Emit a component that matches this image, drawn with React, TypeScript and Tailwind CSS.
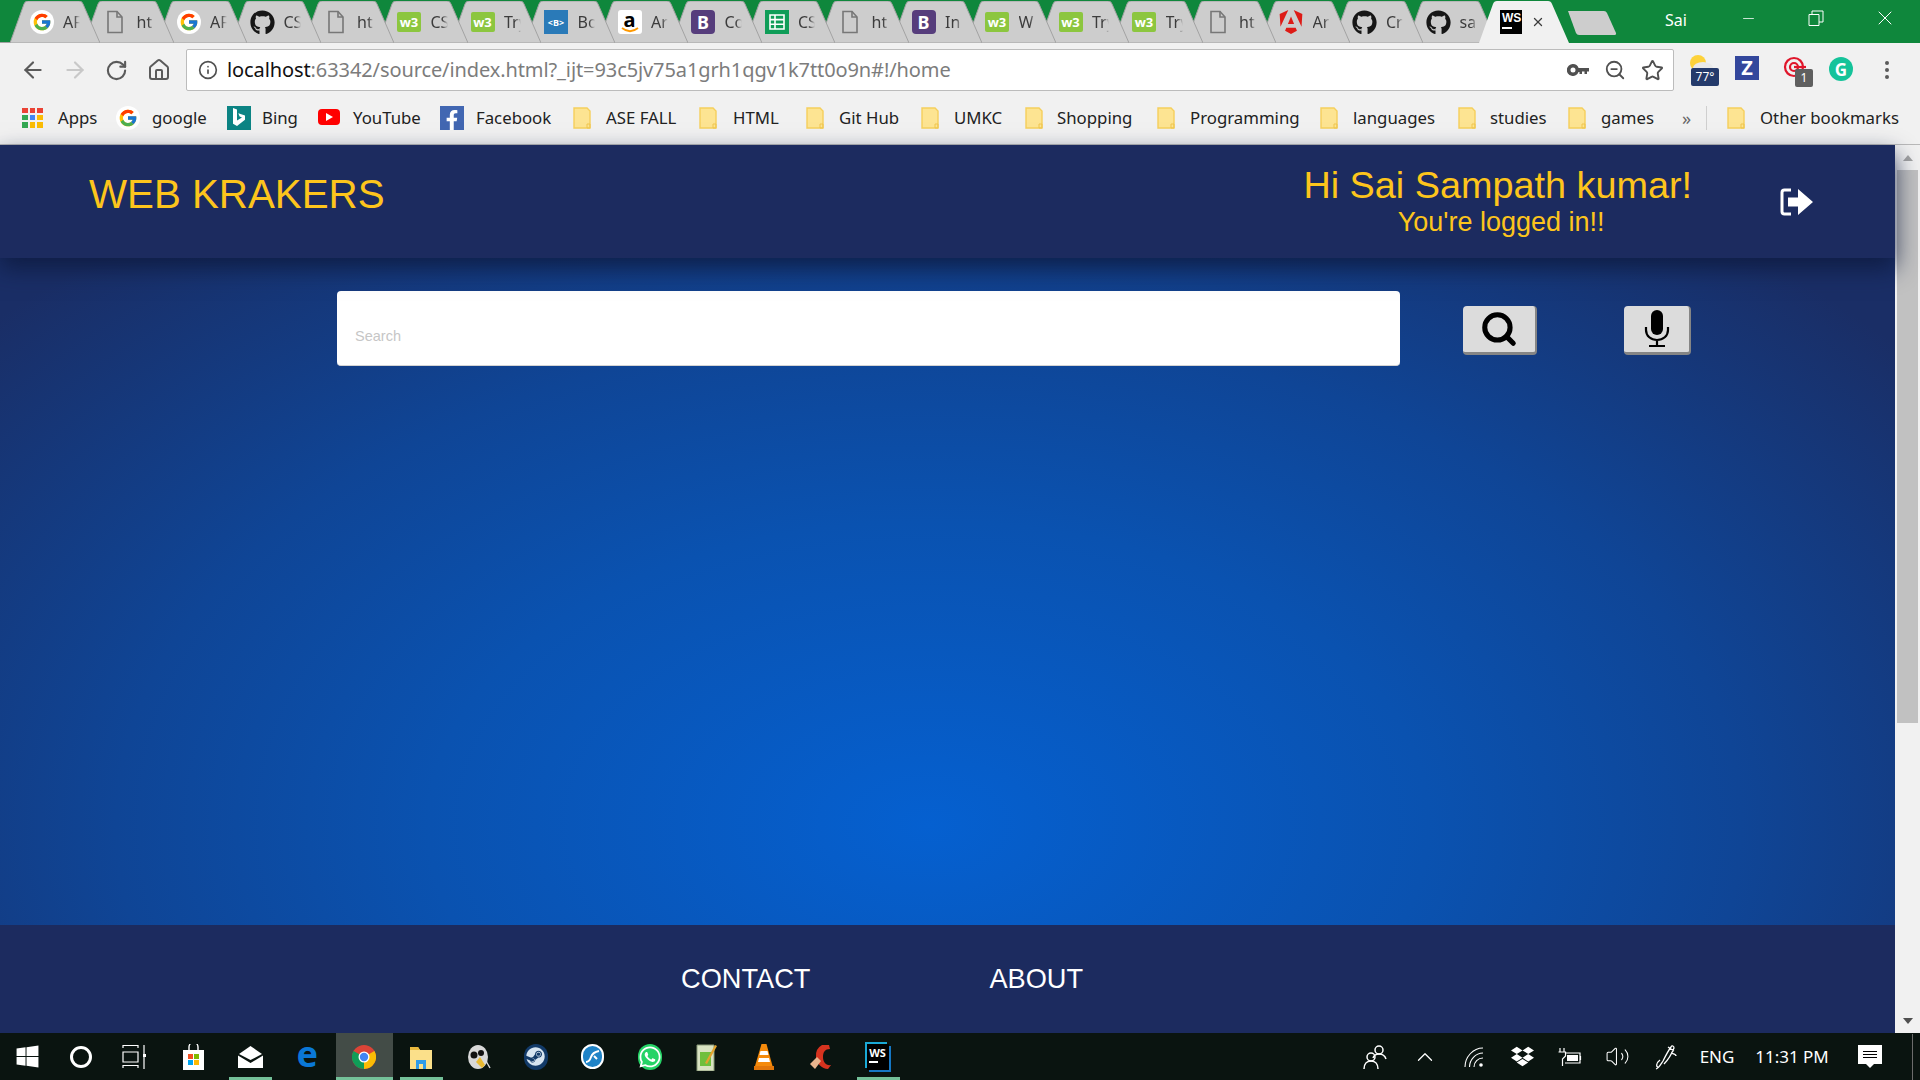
import {
  ArrowLeft,
  ArrowRight,
  ChevronUp,
  Home,
  Info,
  Minus,
  RotateCw,
  Search,
  Star,
  Volume2,
  X,
  ZoomOut,
} from "lucide-react";
import { FaDropbox, FaFacebookF, FaGithub, FaSteam, FaWhatsapp, FaWindows } from "react-icons/fa";
import { FcGoogle } from "react-icons/fc";
import { SiAngular } from "react-icons/si";

const uiFont = "font-['Noto_Sans',sans-serif]";

function GoogleIcon() {
  return (
    <span className="flex h-[24px] w-[24px] shrink-0 items-center justify-center rounded-full bg-white">
      <FcGoogle size={20} />
    </span>
  );
}

function FileIcon() {
  return (
    <svg width="18" height="24" viewBox="0 0 18 24" fill="none" stroke="#777" strokeWidth="1.6" className="shrink-0">
      <path d="M2 1.500h9l5 5.500v15.500H2z" />
      <path d="M11 1.500V7h5" />
    </svg>
  );
}

function W3Icon() {
  return (
    <span className="flex h-[20px] w-[24px] shrink-0 items-center justify-center rounded-[2px] bg-[#8cc63f] text-[13px] font-bold leading-none text-white">
      w3
    </span>
  );
}

function BootIcon() {
  return (
    <span className="flex h-[24px] w-[24px] shrink-0 items-center justify-center rounded-[4px] bg-[#563d7c] text-[18px] font-bold leading-none text-white">
      B
    </span>
  );
}

function BlueBootIcon() {
  return (
    <span className="flex h-[24px] w-[24px] shrink-0 items-center justify-center bg-[#2a7ab8] text-[9px] font-bold leading-none text-white">
      {"<B>"}
    </span>
  );
}

function AmazonIcon() {
  return (
    <span className="relative flex h-[24px] w-[24px] shrink-0 items-center justify-center rounded-[3px] bg-white text-[20px] font-bold leading-none text-black">
      <span className="-mt-[5px]">a</span>
      <svg width="18" height="6" viewBox="0 0 18 6" className="absolute bottom-[1px] left-[3px]" fill="none" stroke="#f90" strokeWidth="1.8">
        <path d="M1 1c5 4 11 4 16 0" />
      </svg>
    </span>
  );
}

function SheetsIcon() {
  return (
    <span className="flex h-[24px] w-[24px] shrink-0 items-center justify-center bg-[#0f9d58]">
      <svg width="16" height="16" viewBox="0 0 16 16" fill="none" stroke="#fff" strokeWidth="1.6">
        <path d="M1 1h14v14H1zM1 5.600h14M1 10.300h14M6 1v14" />
      </svg>
    </span>
  );
}

function WsIcon() {
  return (
    <span className="flex h-[24px] w-[22px] shrink-0 flex-col bg-black px-[2px] pt-[2px] font-['Liberation_Sans',sans-serif] text-[12px] font-bold leading-none text-white">
      WS
      <span className="mt-[3px] h-[2px] w-[10px] bg-white" />
    </span>
  );
}

const tabs = [
  { icon: <GoogleIcon />, title: "AF" },
  { icon: <FileIcon />, title: "ht" },
  { icon: <GoogleIcon />, title: "AF" },
  { icon: <FaGithub size={25} className="shrink-0 text-[#161616]" />, title: "CS" },
  { icon: <FileIcon />, title: "ht" },
  { icon: <W3Icon />, title: "CS" },
  { icon: <W3Icon />, title: "Try" },
  { icon: <BlueBootIcon />, title: "Bo" },
  { icon: <AmazonIcon />, title: "Ar" },
  { icon: <BootIcon />, title: "Co" },
  { icon: <SheetsIcon />, title: "CS" },
  { icon: <FileIcon />, title: "ht" },
  { icon: <BootIcon />, title: "In" },
  { icon: <W3Icon />, title: "W" },
  { icon: <W3Icon />, title: "Try" },
  { icon: <W3Icon />, title: "Try" },
  { icon: <FileIcon />, title: "ht" },
  { icon: <SiAngular size={24} className="shrink-0 text-[#dd1b16]" />, title: "Ar" },
  { icon: <FaGithub size={25} className="shrink-0 text-[#161616]" />, title: "Cr" },
  { icon: <FaGithub size={25} className="shrink-0 text-[#161616]" />, title: "sa" },
];

function Tab({ icon, title, index }: { icon: React.ReactNode; title: string; index: number }) {
  return (
    <div className="relative -mr-[16.5px] h-[42px] w-[90px] shrink-0" style={{ zIndex: 30 - index }}>
      <svg width="90" height="42" viewBox="0 0 90 42" className="absolute inset-0">
        <path d="M0 42 L14 3 Q15 0 18 0 L69 0 Q72 0 73 3 L90 42 Z" fill="#cdcdcd" stroke="#a2a2a2" strokeWidth="1" />
      </svg>
      <div className="relative flex h-full items-center">
        <span className="flex w-[64px] items-center justify-center pr-[1px]">{icon}</span>
      </div>
      <span className="absolute left-[53px] top-[9px] w-[17px] overflow-hidden whitespace-nowrap text-[16px] leading-[24px] text-[#3c3c3c] [mask-image:linear-gradient(to_right,black_65%,transparent)]">
        {title}
      </span>
    </div>
  );
}

function TabStrip() {
  return (
    <div className={`relative flex h-[43px] shrink-0 bg-[#0f873c] pl-[10px] pt-[1px] ${uiFont}`}>
      <div className="absolute bottom-0 left-0 h-[1px] w-[1482px] bg-[#a2a2a2]" />
      {tabs.map((t, i) => (
        <Tab key={i} index={i} icon={t.icon} title={t.title} />
      ))}
      {/* active tab */}
      <div className="relative z-40 -ml-[1px] h-[42px] w-[90px] shrink-0">
        <svg width="90" height="42" viewBox="0 0 90 42" className="absolute inset-0">
          <path d="M0 42 L14 3 Q15 0 18 0 L69 0 Q72 0 73 3 L90 42 Z" fill="#f1f1f1" />
        </svg>
        <div className="relative flex h-full items-center">
          <span className="flex w-[64px] items-center justify-center">
            <WsIcon />
          </span>
          <X size={14} strokeWidth={2.2} className="-ml-[12px] text-[#3c3c3c]" />
        </div>
      </div>
      <svg width="50" height="26" viewBox="0 0 50 26" className="ml-[-2px] mt-[9px] shrink-0">
        <path d="M1 1 H37 Q39 1 40 3 L49 23 Q49.500 25 47 25 H12 Q10 25 9 23 Z" fill="#cdcdcd" />
      </svg>
      <span className="ml-[48px] mt-[8px] text-[16px] leading-[22px] text-white">Sai</span>
      <div className="ml-auto flex text-white">
        <span className="flex w-[68px] items-center justify-center pb-[8px]">
          <Minus size={17} strokeWidth={1.1} />
        </span>
        <span className="flex w-[68px] items-center justify-center pb-[8px]">
          <svg width="16" height="16" viewBox="0 0 16 16" fill="none" stroke="#fff" strokeWidth="1">
            <path d="M1 4.500h10v11H1zM4 4.500V1h11v11h-4" />
          </svg>
        </span>
        <span className="flex w-[70px] items-center justify-center pb-[8px]">
          <X size={24} strokeWidth={1} />
        </span>
      </div>
    </div>
  );
}

function Toolbar() {
  return (
    <div className={`flex h-[48px] shrink-0 items-center bg-[#f1f1f1] pt-[6px] ${uiFont}`}>
      <div className="flex w-[186px] items-center pl-[20px] text-[#5a5a5a]">
        <span className="flex w-[42px]">
          <ArrowLeft size={26} strokeWidth={2} />
        </span>
        <span className="flex w-[43px] text-[#c8c8c8]">
          <ArrowRight size={26} strokeWidth={2} />
        </span>
        <span className="flex w-[42px]">
          <RotateCw size={23} strokeWidth={2.2} />
        </span>
        <Home size={24} strokeWidth={2} />
      </div>
      <div className="flex h-[42px] w-[1488px] items-center rounded-[2px] border border-[#bcbcbc] bg-white pl-[11px] pr-[9px]">
        <Info size={20} strokeWidth={2} className="text-[#505050]" />
        <span className="ml-[9px] whitespace-nowrap text-[20px] leading-none tracking-[-0.1px] text-[#111]">
          localhost<span className="text-[#7c7c7c]">:63342/source/index.html?_ijt=93c5jv75a1grh1qgv1k7tt0o9n#!/home</span>
        </span>
        <svg width="22" height="12" viewBox="0 0 22 12" className="ml-auto text-[#505050]" fill="currentColor">
          <path d="M6 0a6 6 0 015.600 4H22v3.500h-2V10h-2.500V7.500H15V10h-2.500V8h-1A6 6 0 116 0zm0 3.500a2.500 2.500 0 100 5 2.500 2.500 0 000-5z" />
        </svg>
        <ZoomOut size={22} strokeWidth={2} className="ml-[15px] text-[#505050]" />
        <Star size={23} strokeWidth={2} className="ml-[15px] text-[#505050]" />
      </div>
      <div className="relative flex flex-1 items-center">
        <span className="relative ml-[14px] h-[34px] w-[28px]">
          <svg width="24" height="22" viewBox="0 0 24 22" className="absolute left-[1px] top-[0px]">
            <circle cx="9" cy="10" r="8" fill="#fdd23a" />
            <ellipse cx="14" cy="15" rx="10" ry="6" fill="#e9e9e9" />
          </svg>
          <span className="absolute left-[3px] top-[15px] flex h-[18px] w-[28px] items-center justify-center rounded-[2px] bg-[#243a6b] text-[12px] leading-none text-white">
            77°
          </span>
        </span>
        <span className="ml-[19px] -mt-[5px] flex h-[24px] w-[24px] items-center justify-center bg-[#33479c] text-[20px] font-bold leading-none text-white">
          Z
        </span>
        <span className="relative ml-[24px] h-[34px] w-[30px]">
          <svg width="24" height="22" viewBox="0 0 24 22" fill="none" stroke="#e0162b" strokeWidth="2.2" className="absolute left-0 top-[3px]">
            <circle cx="11" cy="11" r="9" />
            <circle cx="11" cy="11" r="4" />
            <path d="M11 11h12" />
          </svg>
          <span className="absolute left-[12px] top-[16px] flex h-[18px] w-[18px] items-center justify-center rounded-[2px] bg-[#5f5f5f] text-[12px] leading-none text-white">
            1
          </span>
        </span>
        <span className="ml-[16px] -mt-[2px] flex h-[24px] w-[24px] items-center justify-center rounded-full bg-[#15c39a] text-[17px] font-bold leading-none text-white">
          G
        </span>
        <span className="ml-[32px] flex flex-col gap-[3px]">
          <i className="h-[4px] w-[4px] rounded-full bg-[#5a5a5a]" />
          <i className="h-[4px] w-[4px] rounded-full bg-[#5a5a5a]" />
          <i className="h-[4px] w-[4px] rounded-full bg-[#5a5a5a]" />
        </span>
      </div>
    </div>
  );
}

function Folder() {
  return (
    <svg width="18" height="22" viewBox="0 0 18 22" className="shrink-0">
      <path d="M1 1h13l3 3v17H1z" fill="#fde492" stroke="#f5cf5c" strokeWidth="1.400" />
      <path d="M14 21v-4h3v4z" fill="none" stroke="#f0c64e" strokeWidth="1" />
    </svg>
  );
}

function Bookmark({ label, icon, gap, width }: { label: string; icon?: React.ReactNode; gap: string; width: string }) {
  return (
    <span className={`flex shrink-0 items-center ${gap} ${width}`}>
      {icon ?? <Folder />}
      <span className="whitespace-nowrap pt-[1px]">{label}</span>
    </span>
  );
}

function BookmarksBar() {
  return (
    <div className={`flex h-[54px] shrink-0 items-center border-b border-[#b9b9b9] bg-[#f1f1f1] pl-[22px] text-[16.8px] leading-none text-[#222] ${uiFont}`}>
      <Bookmark
        label="Apps"
        gap="gap-[15px]"
        width="w-[94px]"
        icon={
          <span className="grid h-[20px] w-[21px] shrink-0 grid-cols-3 gap-[2px]">
            <i className="bg-[#ea4335]" />
            <i className="bg-[#ea4335]" />
            <i className="bg-[#ea4335]" />
            <i className="bg-[#34a853]" />
            <i className="bg-[#4285f4]" />
            <i className="bg-[#fbbc05]" />
            <i className="bg-[#34a853]" />
            <i className="bg-[#fbbc05]" />
            <i className="bg-[#fbbc05]" />
          </span>
        }
      />
      <Bookmark label="google" gap="gap-[12px]" width="w-[111px]" icon={<GoogleIcon />} />
      <Bookmark
        label="Bing"
        gap="gap-[11px]"
        width="w-[91px]"
        icon={
          <span className="flex h-[24px] w-[24px] items-center justify-center bg-[#0c8484]">
            <svg width="14" height="19" viewBox="0 0 14 19" fill="#fff">
              <path d="M1 0l4 1.400v11l5-2.800-2.400-1.200-1.300-3.200L13 7.400v4.400L5 18l-4-2.200z" />
            </svg>
          </span>
        }
      />
      <Bookmark
        label="YouTube"
        gap="gap-[13px]"
        width="w-[122px]"
        icon={
          <span className="flex h-[16px] w-[22px] items-center justify-center rounded-[4px] bg-[#f00]">
            <i className="h-0 w-0 border-y-[4px] border-l-[7px] border-y-transparent border-l-white" />
          </span>
        }
      />
      <Bookmark
        label="Facebook"
        gap="gap-[12px]"
        width="w-[133px]"
        icon={
          <span className="flex h-[24px] w-[24px] items-end justify-end bg-[#4267b2] pr-[2px] text-white">
            <FaFacebookF size={20} />
          </span>
        }
      />
      <Bookmark label="ASE FALL" gap="gap-[15px]" width="w-[126px]" />
      <Bookmark label="HTML" gap="gap-[16px]" width="w-[107px]" />
      <Bookmark label="Git Hub" gap="gap-[15px]" width="w-[115px]" />
      <Bookmark label="UMKC" gap="gap-[15px]" width="w-[104px]" />
      <Bookmark label="Shopping" gap="gap-[14px]" width="w-[132px]" />
      <Bookmark label="Programming" gap="gap-[15px]" width="w-[163px]" />
      <Bookmark label="languages" gap="gap-[15px]" width="w-[138px]" />
      <Bookmark label="studies" gap="gap-[14px]" width="w-[110px]" />
      <Bookmark label="games" gap="gap-[15px]" width="w-[114px]" />
      <span className="w-[24px] text-[18px] text-[#666]">»</span>
      <span className="h-[24px] w-[1px] bg-[#cfcfcf]" />
      <span className="ml-[20px]">
        <Bookmark label="Other bookmarks" gap="gap-[15px]" width="" />
      </span>
    </div>
  );
}

function ScrollBar() {
  return (
    <div className="flex w-[25px] shrink-0 flex-col items-center bg-[#f1f1f1]">
      <div className="flex h-[25px] w-full items-center justify-center">
        <i className="h-0 w-0 border-x-[5px] border-b-[6px] border-x-transparent border-b-[#a3a3a3]" />
      </div>
      <div className="h-[553px] w-[21px] bg-[#c1c1c1]" />
      <div className="flex-1" />
      <div className="flex h-[25px] w-full items-center justify-center">
        <i className="h-0 w-0 border-x-[5px] border-t-[6px] border-x-transparent border-t-[#505050]" />
      </div>
    </div>
  );
}

function Page() {
  return (
    <div className="flex min-w-0 flex-1 flex-col font-['Liberation_Sans',sans-serif]">
      <header className="relative z-10 flex h-[113px] shrink-0 items-center bg-[#1c2b5f] shadow-[0_10px_22px_rgba(13,25,60,0.8)]">
        <h1 className="ml-[89px] -mt-[12px] text-[40.3px] leading-none text-[#fdc51c]">WEB KRAKERS</h1>
        <div className="ml-auto mb-[4px] flex flex-col items-center text-[#fdc51c]">
          <span className="text-[37.8px] leading-[44px]">Hi Sai Sampath kumar!</span>
          <span className="ml-[7px] text-[27px] leading-[30px]">You're logged in!!</span>
        </div>
        <svg width="34" height="28" viewBox="0 0 34 28" fill="none" className="ml-[88px] mr-[81px] mt-[1px] shrink-0">
          <path d="M11 2H4.500Q2 2 2 4.500v19Q2 26 4.500 26H11" stroke="#fff" strokeWidth="3" />
          <path d="M8 9.500h10V1l15 13-15 13v-8.500H8z" fill="#fff" />
        </svg>
      </header>
      <main className="flex flex-1 items-start bg-[radial-gradient(ellipse_1250px_760px_at_49%_85%,#0560d0_0%,#0a52b0_40%,#0f4596_65%,#1a2e66_100%)] pl-[337px] pt-[33px]">
        <div className="flex h-[75px] w-[1063px] items-center rounded-[4px] border-b border-[#d4d4d4] bg-white pl-[18px] pt-[17px] text-[14.5px] text-[#c6c6c6]">
          Search
        </div>
        <button type="button" className="ml-[63px] mt-[15px] flex h-[49px] w-[74px] items-center justify-center rounded-[4px] border-b-[3px] border-r-[2px] border-[#858585] bg-[#dcdcdc] text-black">
          <Search size={38} strokeWidth={3.2} />
        </button>
        <button type="button" className="ml-[87px] mt-[15px] flex h-[49px] w-[67px] items-center justify-center rounded-[4px] border-b-[3px] border-r-[2px] border-[#858585] bg-[#dcdcdc] text-black">
          <svg width="26" height="38" viewBox="0 0 26 38" fill="none">
            <rect x="7" y="0" width="12" height="25" rx="6" fill="#000" />
            <path d="M2 17v3c0 6 5 10 11 10s11-4 11-10v-3M13 30v5M5 36h16" stroke="#000" strokeWidth="2.200" />
          </svg>
        </button>
      </main>
      <footer className="flex h-[108px] shrink-0 items-center bg-[#1c2b5f] pl-[681px] text-[27.2px] text-white">
        <span>CONTACT</span>
        <span className="ml-[179px]">ABOUT</span>
      </footer>
    </div>
  );
}

function Taskbar() {
  const cell = "relative flex h-full w-[57.1px] shrink-0 items-center justify-center";
  const running = "absolute bottom-0 left-[7px] right-[7px] h-[3px] bg-[#74c199]";
  return (
    <div className={`flex h-[47px] shrink-0 items-center bg-[#0a1410] text-white ${uiFont}`}>
      <span className="flex h-full w-[54px] items-center justify-center">
        <FaWindows size={25} />
      </span>
      <span className="flex h-full w-[54px] items-center justify-center">
        <i className="h-[22px] w-[22px] rounded-full border-[3px] border-white" />
      </span>
      <span className="mr-[2.5px] flex h-full w-[54px] items-center justify-center">
        <svg width="26" height="24" viewBox="0 0 26 24" fill="none" stroke="#fff" strokeWidth="1.2">
          <path d="M1 3V0.500h15V3M1 7h15v10H1zM1 23v-2.500h15V23M22 0v24" />
          <rect x="21" y="9" width="3" height="3" fill="#fff" stroke="none" />
        </svg>
      </span>
      <span className={cell}>
        <svg width="23" height="26" viewBox="0 0 23 26">
          <path d="M1 6h21v20H1z" fill="#fff" />
          <path d="M7 7V3a4 4 0 019 0v4" fill="none" stroke="#fff" strokeWidth="1.400" />
          <rect x="6" y="10" width="5" height="5" fill="#f25022" />
          <rect x="12" y="10" width="5" height="5" fill="#7fba00" />
          <rect x="6" y="16" width="5" height="5" fill="#00a4ef" />
          <rect x="12" y="16" width="5" height="5" fill="#ffb900" />
        </svg>
      </span>
      <span className={cell}>
        <svg width="25" height="22" viewBox="0 0 25 22" fill="#fff">
          <path d="M12.500 0L24 8 12.500 14 1 8z" />
          <path d="M0 9.500L12.500 17 25 9.500V22H0z" />
        </svg>
        <i className={running} />
      </span>
      <span className={cell}>
        <span className="-mt-[6px] text-[36px] font-bold leading-none text-[#0a78d7]">e</span>
      </span>
      <span className={`${cell} bg-[#434c47]`}>
        <svg width="24" height="24" viewBox="0 0 24 24">
          <circle cx="12" cy="12" r="12" fill="#db4437" />
          <path d="M12 12L1.600 6A12 12 0 0012 24z" fill="#0f9d58" />
          <path d="M12 12L22.400 6A12 12 0 0112 24z" fill="#fbbc05" />
          <circle cx="12" cy="12" r="5.500" fill="#fff" />
          <circle cx="12" cy="12" r="4.200" fill="#4285f4" />
        </svg>
        <i className="absolute inset-x-0 bottom-0 h-[3px] bg-[#74c199]" />
      </span>
      <span className={cell}>
        <svg width="22" height="24" viewBox="0 0 22 24">
          <path d="M0 2h8l2 3h12v19H0z" fill="#fbe08a" />
          <path d="M0 2h8l2 3H0z" fill="#e9b93e" />
          <path d="M6 24v-9h10v9h-3v-5H9v5z" fill="#2f9ce8" />
        </svg>
        <i className={running} />
      </span>
      <span className={cell}>
        <svg width="24" height="26" viewBox="0 0 24 26">
          <ellipse cx="11" cy="13" rx="10" ry="12" fill="#d8d8d8" />
          <circle cx="7" cy="11" r="3.500" fill="#111" />
          <circle cx="14" cy="9" r="3" fill="#111" />
          <path d="M9 18l4-5 5 8-3 3z" fill="#e8b931" />
          <path d="M19 17l4 7" stroke="#ddd" strokeWidth="1.400" />
        </svg>
      </span>
      <span className={cell}>
        <span className="flex h-[26px] w-[24px] items-center justify-center rounded-full bg-[#123a68] text-[#d6e4f0]">
          <FaSteam size={19} />
        </span>
      </span>
      <span className={cell}>
        <span className="flex h-[25px] w-[23px] items-center justify-center rounded-full border-2 border-white bg-[#1f83c7]">
          <svg width="15" height="15" viewBox="0 0 15 15" fill="none" stroke="#fff" strokeWidth="2">
            <path d="M1 13c3 0 4-2 5-5s3-5 8-6M9 7l3 3" />
          </svg>
        </span>
      </span>
      <span className={cell}>
        <span className="flex h-[26px] w-[24px] items-center justify-center rounded-full bg-[#25d366] text-white">
          <FaWhatsapp size={24} />
        </span>
      </span>
      <span className={cell}>
        <svg width="22" height="28" viewBox="0 0 22 28">
          <path d="M1 2h17v26H1z" fill="#d9e3c2" stroke="#8a9a78" strokeWidth="1" />
          <path d="M4 9h11v14H4z" fill="#6fbf3c" />
          <path d="M9 20L19 2l2 1-10 18z" fill="#e2a32e" />
        </svg>
      </span>
      <span className={cell}>
        <svg width="20" height="26" viewBox="0 0 20 26">
          <path d="M7.500 0h5l6 22H1z" fill="#f58a0b" />
          <path d="M6.500 7h7l1 4h-9zM5 14h10l1 4H4z" fill="#fff" />
          <path d="M0 22h20v4H0z" fill="#e2760a" />
        </svg>
      </span>
      <span className={cell}>
        <svg width="22" height="26" viewBox="0 0 22 26">
          <path d="M12 1a11 12 0 00-6 12c0 6 6 12 12 12l3-4c-5 1-8-3-8-8s2-8 7-8l-1-4z" fill="#d6331f" />
          <path d="M0 20l7-7 4 4-6 8z" fill="#e9b58e" />
        </svg>
      </span>
      <span className={cell}>
        <span className="flex h-[26px] w-[22px] flex-col bg-black px-[2px] pt-[3px] text-[11px] font-bold leading-none text-white shadow-[-2px_-2px_0_#1aa9d6,2px_2px_0_#1577c4]">
          WS
          <i className="mt-[3px] h-[2px] w-[9px] bg-white" />
        </span>
        <i className={running} />
      </span>

      <div className="ml-auto flex h-full items-center">
        <span className="flex w-[51px] justify-center">
          <svg width="24" height="26" viewBox="0 0 24 26" fill="none" stroke="#fff" strokeWidth="1.500">
            <circle cx="16" cy="6" r="4" />
            <path d="M10 14c1-3 3-4 6-4s6 2 7 5" />
            <circle cx="8" cy="13" r="4" />
            <path d="M1 25c0-5 3-8 7-8s7 3 7 8" />
          </svg>
        </span>
        <span className="flex w-[50px] justify-center">
          <ChevronUp size={26} strokeWidth={1.2} />
        </span>
        <span className="flex w-[48px] justify-center">
          <svg width="20" height="20" viewBox="0 0 20 20" fill="none" stroke="#fff" strokeWidth="1.1">
            <path d="M1 20C1 10 9 1 19 1M5.500 20c0-7 6-14 13.500-14M10 20c0-5 4-9 9-9" />
            <circle cx="17" cy="18" r="1.800" fill="#fff" stroke="none" />
          </svg>
        </span>
        <span className="flex w-[48px] justify-center">
          <FaDropbox size={23} />
        </span>
        <span className="flex w-[47px] justify-center">
          <svg width="25" height="20" viewBox="0 0 25 20" fill="none" stroke="#fff" strokeWidth="1.200">
            <path d="M3 1v4M7 1v4M1.500 5h7v4l-3 3v7" />
            <path d="M9 6h14v10H8" />
            <rect x="10" y="8" width="11" height="6" fill="#fff" stroke="none" />
            <path d="M23.500 9v4" />
          </svg>
        </span>
        <span className="flex w-[48px] justify-center">
          <Volume2 size={25} strokeWidth={1} />
        </span>
        <span className="flex w-[49px] justify-center">
          <svg width="22" height="26" viewBox="0 0 22 26" fill="none" stroke="#fff" strokeWidth="1.300">
            <path d="M1 25c3-1 5-5 7-8 2-4 5-10 8-14 1-2 3-1 3 1-2 5-6 12-10 16M5 16c-4 3-4 7-2 7M13 3l6 4M16 9c3 1 5 1 5 3" />
          </svg>
        </span>
        <span className="ml-[9px] w-[36px] text-center text-[17px] leading-none">ENG</span>
        <span className="ml-[18px] w-[78px] whitespace-nowrap text-center text-[17px] leading-none">11:31 PM</span>
        <span className="ml-[27px] flex w-[24px] flex-col">
          <span className="flex h-[19px] w-[24px] flex-col items-center justify-center gap-[2px] bg-white">
            <i className="h-[1px] w-[14px] bg-black" />
            <i className="h-[1px] w-[14px] bg-black" />
            <i className="h-[1px] w-[14px] bg-black" />
          </span>
          <i className="ml-[8px] h-0 w-0 border-x-[4px] border-t-[4px] border-x-transparent border-t-white" />
        </span>
        <span className="ml-[30px] mr-[7px] h-[46px] w-[1px] bg-[#6c6c6c]" />
      </div>
    </div>
  );
}

export default function App() {
  return (
    <div className="flex h-screen w-screen flex-col overflow-hidden">
      <TabStrip />
      <Toolbar />
      <BookmarksBar />
      <div className="flex min-h-0 flex-1">
        <Page />
        <ScrollBar />
      </div>
      <Taskbar />
    </div>
  );
}
